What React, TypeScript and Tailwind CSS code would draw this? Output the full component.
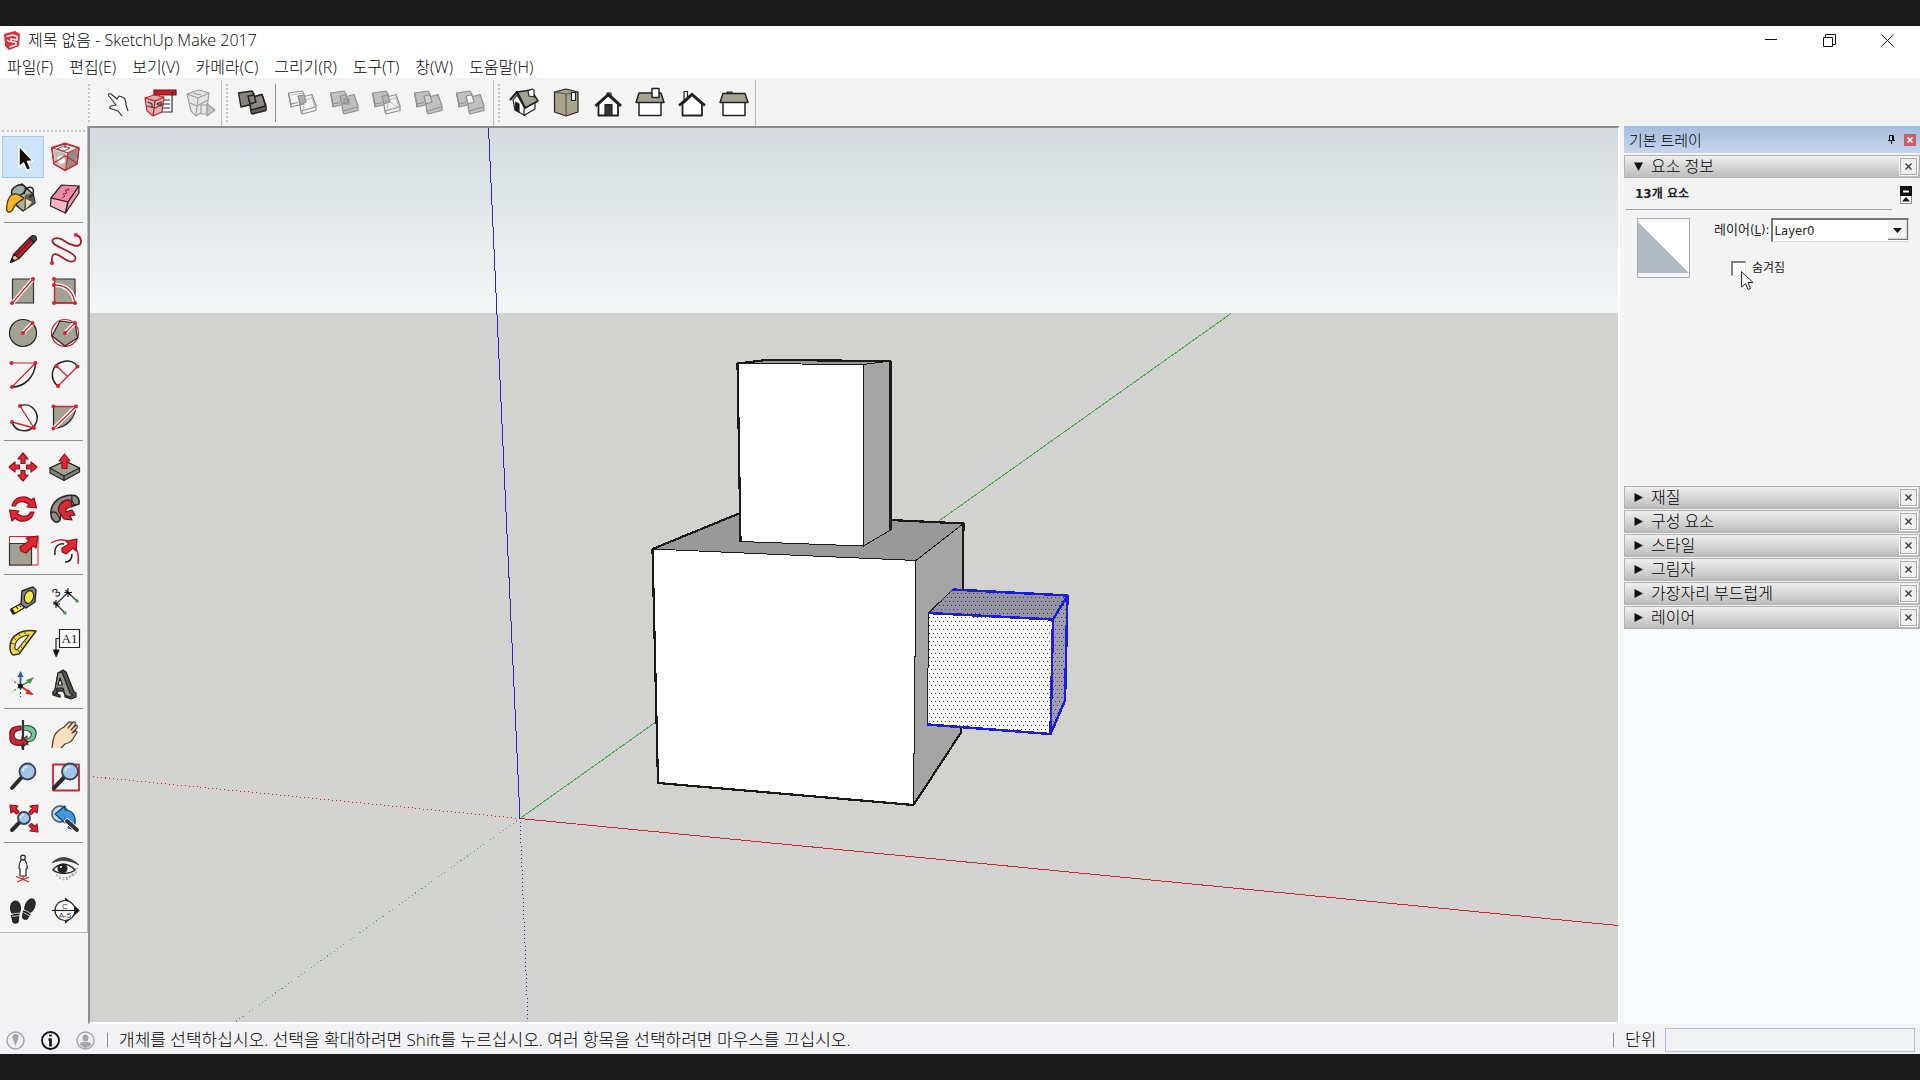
import type { ReactNode } from "react";
import clsx from "clsx";

interface ToolProps {
  /** Accessible name of the tool. */
  label: string;
  active?: boolean;
  children: ReactNode;
}

/** Square toolbar button; icons are drawn on a 42x42 grid. */
function Tool({ label, active, children }: ToolProps) {
  return (
    <button
      type="button"
      aria-label={label}
      aria-pressed={active}
      className={clsx("size-[42px] shrink-0", active && "bg-[#cce4f7] outline outline-1 -outline-offset-1 outline-[#a3c9ea]")}
    >
      <svg viewBox="0 0 42 42" className="size-full" fill="none" stroke="#222" strokeWidth="1.2" strokeLinejoin="round">
        {children}
      </svg>
    </button>
  );
}

const RED = "#d8202f";
const ARROW = "#e82534";
const ARROW_EDGE = "#8a141e";
const TAUPE = "#a3a292";

/** Round red end points used by the drawing tools. */
function Dots({ at }: { at: [number, number][] }) {
  return (
    <g fill={RED} stroke="none">
      {at.map(([x, y]) => (
        <circle key={`${x}-${y}`} cx={x} cy={y} r="2" />
      ))}
    </g>
  );
}

function Lens({ cx, cy, r, hx, hy }: { cx: number; cy: number; r: number; hx: number; hy: number }) {
  const k = r * 0.75;
  return (
    <>
      <path d={`M${cx - k} ${cy + k}L${hx} ${hy}`} stroke="#2c2c2c" strokeWidth="4" strokeLinecap="round" />
      <circle cx={cx} cy={cy} r={r} fill="#a6c4e8" stroke="#35425a" strokeWidth="1.8" />
      <path d={`M${cx - r * 0.6} ${cy}A${r * 0.6} ${r * 0.6} 0 0 1 ${cx} ${cy - r * 0.6}`} stroke="#e4effb" strokeWidth="1.6" />
    </>
  );
}

/* ------------------------------------------------------------------ */
/* Left tool palette                                                   */
/* ------------------------------------------------------------------ */

const palette: { label: string; active?: boolean; icon: ReactNode }[][] = [
  [
    {
      label: "Select",
      active: true,
      icon: <path d="M17 10V31L21.5 27L25 34.5L28.8 32.8L25.5 25.5L31 25Z" fill="#111" stroke="#fff" strokeWidth="1.5" />,
    },
    {
      label: "Make Component",
      icon: (
        <>
          <path d="M8 12L21 8L35 12L33 28L21 34L10 28Z" fill="#e9e6e2" stroke="#444" />
          <path d="M24 17L34 13L32 28L22 33Z" fill="#8f8d84" stroke="none" />
          <path d="M10 14L23 18L21 33L11 27Z" fill="#bdbab2" stroke="none" />
          <path d="M13 13l7-3 6 2-6 3Z" fill="#fff" stroke="#444" strokeWidth="0.8" />
          <path d="M13 22l3-3 4 2 1 5-4 2-3-2Z" fill="#fff" stroke="none" />
          <g stroke={RED} strokeWidth="1.3">
            <path d="M7.5 11.5L21 7L35 11.5L33 28L21 34.5L10 28Z" />
            <path d="M7.5 11.5L24 17L35 11.5M24 17L21.5 34M10 27L21 20L33 27M21 7V12" />
          </g>
        </>
      ),
    },
    {
      label: "Paint Bucket",
      icon: (
        <>
          <path d="M10 12L20 6L31 16L33 25L21 33L15 28Z" fill="#b5af93" stroke="#222" strokeWidth="1.5" />
          <path d="M23 17L30 15L33 25L22 32Z" fill="#5f5c50" stroke="none" />
          <path d="M24 21L30 24L24 31Z" fill="#e2dcb9" stroke="none" />
          <ellipse cx="16.5" cy="12.5" rx="7.5" ry="5" transform="rotate(-28 16.5 12.5)" fill="#9fb0ab" stroke="#222" strokeWidth="1.5" />
          <path d="M22 16C24 8 31 7 31.5 13C31.5 16 29 19 27 19" strokeWidth="1.5" />
          <path d="M15 16C8 15 5 21 4.5 32C6 36 10 34 11.5 30C13 25 18 24 22 20Z" fill="#f8b427" stroke="#3a2d0c" />
        </>
      ),
    },
    {
      label: "Eraser",
      icon: (
        <>
          <path d="M7 20L17.5 7L35 8L24 24Z" fill="#f48aa9" />
          <path d="M7 20L24 24L21.5 35L6.5 28Z" fill="#fbb3c6" />
          <path d="M24 24L35 8V15L21.5 35Z" fill="#e79ab0" />
          <path d="M18 20l3-2-2-2 4-1-2-3 4 0-1-2" stroke="#8d2746" strokeWidth="1" />
        </>
      ),
    },
  ],
  [
    {
      label: "Line",
      icon: (
        <>
          <path d="M8.5 34.5L12 26L27.5 10L32 14.5L17 30.5Z" fill="#c02431" />
          <path d="M8.5 34.5L12 26L17 30.5Z" fill="#e6d1a0" />
          <path d="M8.5 34.5L10 30.5L12.5 32.8Z" fill="#222" />
          <path d="M27.5 10L30.5 7.5Q35 7.5 34.5 11.5L32 14.5Z" fill="#444" />
          <path d="M14 28L29.5 12" stroke="#751019" />
        </>
      ),
    },
    {
      label: "Freehand",
      icon: (
        <>
          <path d="M8 34C7 23 13 26 16 28C22 32 28 36 31 32C35 26 15 20 10 16C5 11 13 8 19 12C26 17 36 21 37 14Q37 8 32 7" stroke="#a01d29" strokeWidth="1.8" />
          <Dots at={[[8, 35], [32, 7]]} />
        </>
      ),
    },
    {
      label: "Rectangle",
      icon: (
        <>
          <rect x="10.5" y="9" width="21" height="24" fill={TAUPE} stroke="#333" />
          <path d="M10.5 33L31 9" stroke="#fff" strokeWidth="4" />
          <path d="M10.5 33L31 9" stroke={RED} strokeWidth="1.3" />
          <Dots at={[[10, 33], [31, 9]]} />
        </>
      ),
    },
    {
      label: "Rotated Rectangle",
      icon: (
        <>
          <rect x="10.5" y="9" width="20.5" height="24" fill={TAUPE} stroke="#333" />
          <path d="M10.5 15Q28 15 31 33" stroke="#fff" strokeWidth="4" />
          <path d="M10.5 9V33H31Q28 15 10.5 15" stroke={RED} strokeWidth="1.3" />
          <Dots at={[[10, 9], [10, 15], [10, 33], [31, 33]]} />
        </>
      ),
    },
    {
      label: "Circle",
      icon: (
        <>
          <circle cx="21" cy="21" r="13.5" fill={TAUPE} />
          <path d="M21 21L30.5 11" stroke="#fff" strokeWidth="4" />
          <path d="M21 21L30.5 11" stroke={RED} strokeWidth="1.3" />
          <Dots at={[[21, 21], [30.5, 11]]} />
        </>
      ),
    },
    {
      label: "Polygon",
      icon: (
        <>
          <circle cx="21" cy="21" r="13.5" stroke={RED} />
          <path d="M16 9L31 11L33.5 26L21 34L8 24Z" fill={TAUPE} />
          <path d="M21 21L31 11" stroke="#fff" strokeWidth="4" />
          <path d="M21 21L31 11" stroke={RED} strokeWidth="1.3" />
          <Dots at={[[21, 21], [31, 11]]} />
        </>
      ),
    },
    {
      label: "Arc",
      icon: (
        <>
          <path d="M33.5 9C33 22 23 33 10 33" strokeWidth="1.5" />
          <path d="M9.5 9H33.5L10 33" stroke={RED} />
          <Dots at={[[9.5, 9], [33.5, 9], [10, 33]]} />
        </>
      ),
    },
    {
      label: "2 Point Arc",
      icon: (
        <>
          <path d="M14 32C5 25 7 11 18 8C25 5.5 31 8 33.5 12.5" strokeWidth="1.5" />
          <path d="M12.5 12L23.5 22.5M33.5 12.5L14 32" stroke={RED} strokeWidth="1.3" />
          <Dots at={[[12.5, 12], [33.5, 12.5], [14, 32]]} />
        </>
      ),
    },
    {
      label: "3 Point Arc",
      icon: (
        <>
          <path d="M18 10C30 5 40 19 33 29C27 38 13 36 10 26" strokeWidth="1.5" />
          <path d="M18 10L32 32L10 26" stroke={RED} strokeWidth="1.3" />
          <Dots at={[[18, 10], [10, 26], [32, 32]]} />
        </>
      ),
    },
    {
      label: "Pie",
      icon: (
        <>
          <path d="M9.5 10.5H32C31 23 22 32 9.5 32.5Z" fill={TAUPE} />
          <path d="M9.5 32.5L32 10.5" stroke="#fff" strokeWidth="4" />
          <path d="M9.5 10.5H32L9.5 32.5" stroke={RED} strokeWidth="1.3" />
          <Dots at={[[9.5, 10.5], [32, 10.5], [9.5, 32.5]]} />
        </>
      ),
    },
  ],
  [
    {
      label: "Move",
      icon: (
        <g fill={ARROW} stroke={ARROW_EDGE}>
          {[0, 90, 180, 270].map((deg) => (
            <path key={deg} transform={`rotate(${deg} 21 21)`} d="M21 7L26 13H23V17.5H19V13H16Z" />
          ))}
        </g>
      ),
    },
    {
      label: "Push/Pull",
      icon: (
        <>
          <path d="M6 22L21 15L35.5 22V26L20 34.5L6 27Z" fill="#85847a" />
          <path d="M6 22L21 15L35.5 22L20 30Z" fill={TAUPE} />
          <path d="M20 30V34.5" />
          <path d="M20.5 8L26 15H23V22.5H18V15H15Z" fill={ARROW} stroke={ARROW_EDGE} />
        </>
      ),
    },
    {
      label: "Rotate",
      icon: (
        <g fill={ARROW} stroke={ARROW_EDGE}>
          <path d="M10 18C12 9 23 6 29 12L32 10L34.5 20L25 19L27 16.5C22 12 15 13 13.5 18Z" />
          <path d="M32 24C30 33 19 36 13 30L10 33L7.5 22L17 23L15 25.5C20 30 27 29 28.5 24Z" />
        </g>
      ),
    },
    {
      label: "Follow Me",
      icon: (
        <>
          <path d="M7 26C6 15 16 6 31 7.500Q36 10 35 16L29 18C25 14 17 17 17 26L16 32Q13 36 10 33Q7 31 7 26Z" fill="#8f8d84" strokeWidth="1.5" />
          <path d="M7 25Q12 21 16 31M28 8Q27 14 31 17.500" />
          <path d="M27 12C19 11 13 17 15 24L20 31L28 32L26 28L31 27L28 22L22 24C21 21 24 19 28 19Z" fill="#d92a38" stroke="#5c1017" />
        </>
      ),
    },
    {
      label: "Scale",
      icon: (
        <>
          <rect x="7.5" y="6.5" width="28.5" height="28.5" stroke={RED} strokeWidth="1" />
          <rect x="7.5" y="13.5" width="22" height="21.5" fill={TAUPE} stroke="#333" />
          <path d="M36 6L34 18L31 16L24 23L19 21L18 17L27 11L24 8Z" fill={ARROW} stroke={ARROW_EDGE} />
        </>
      ),
    },
    {
      label: "Offset",
      icon: (
        <>
          <path d="M7 13C20 4 37 14 34 34" stroke={RED} strokeWidth="1.5" />
          <path d="M11 25C10 17 14 13 20 14M28 24C28 29 26 32 21 32" strokeWidth="1.5" />
          <path d="M33 9L32 21L29 18L22 24L18 22L18 18L25 14L22 11Z" fill={ARROW} stroke={ARROW_EDGE} />
        </>
      ),
    },
  ],
  [
    {
      label: "Tape Measure",
      icon: (
        <>
          <path d="M9 29L20 23L22 28L12 34Z" fill="#f7ea3c" />
          <path d="M9 29L12 34" strokeWidth="3" />
          <path d="M14 26l2 3M17 24l2 3" />
          <path d="M20 11L31 7L34 10L33 22L24 28L19 24Z" fill="#88868b" strokeWidth="1.4" />
          <ellipse cx="27" cy="17" rx="4.5" ry="6.5" transform="rotate(18 27 17)" fill="#f7ea3c" />
        </>
      ),
    },
    {
      label: "Dimension",
      icon: (
        <>
          <path d="M12 24L24 12.5M12 24L21 33M24 12.5L33 21" stroke="#333" />
          <path d="M12 20V28M9 24H16M9.5 21.5L14.5 26.5M24 8V17M20.5 12.5H28M21.5 10L26.5 15" stroke="#111" strokeWidth="1.1" />
          <text x="9" y="17" transform="rotate(-40 12 13)" fontSize="12" fontFamily="Liberation Sans" fill="#111" stroke="none">3</text>
          <g fill="#3fa34a" stroke="none">
            <circle cx="33" cy="21" r="1.8" />
            <circle cx="21" cy="33" r="1.8" />
          </g>
        </>
      ),
    },
    {
      label: "Protractor",
      icon: (
        <>
          <path d="M8 25C8 13 20 7 34 9L17 32L11 33Q8 31 8 25Z" fill="#f2d653" stroke="#3c3210" strokeWidth="1.5" />
          <path d="M13 27C12 19 18 14 27 13L15 28Z" fill="#f5f4f4" stroke="#3c3210" />
          <path d="M9 21l3 1M12 16l2 2M17 12l1 2M23 10v2M18 31l-2-3M21 27l-2-2M25 21l-2-2" stroke="#3c3210" strokeWidth="0.8" />
        </>
      ),
    },
    {
      label: "Text",
      icon: (
        <>
          <rect x="15.5" y="7.5" width="20" height="18" fill="#fff" />
          <text x="25.5" y="21" textAnchor="middle" fontSize="13" fontFamily="Liberation Serif" fill="#111" stroke="none">A1</text>
          <path d="M15.5 16.5H12V29" />
          <path d="M9.5 28H15L12.2 34.5Z" fill="#111" />
        </>
      ),
    },
    {
      label: "Axes",
      icon: (
        <>
          <path d="M18.5 22V13" stroke="#2557a7" strokeWidth="1.8" />
          <path d="M18.5 22L27 17.5" stroke="#3f9a4a" strokeWidth="1.8" />
          <path d="M18.5 22L27 28" stroke={RED} strokeWidth="1.8" />
          <path d="M18.5 24V33" stroke="#2557a7" strokeDasharray="2 2" />
          <path d="M17 23L10 28" stroke="#3f9a4a" strokeDasharray="2 2" />
          <path d="M17 21L10 16" stroke={RED} strokeDasharray="2 2" />
          <path d="M15.5 13L18.5 7L21.5 13Z" fill="#2557a7" stroke="none" />
          <path d="M24 16L32 13L28 20Z" fill="#3f9a4a" stroke="none" />
          <path d="M26 25L32 31L23.5 30Z" fill={RED} stroke="none" />
          <circle cx="18.5" cy="22" r="2" fill="#111" />
        </>
      ),
    },
    {
      label: "3D Text",
      icon: (
        <>
          <path d="M14 9L19 6L22 8L30 28L32 29V33L27 35L21 33V30L19 27H14L13 30L16 31V33L9 31V28L11 26Z" fill="#55544e" strokeWidth="1.3" />
          <path d="M14 9L18 8L26 29L29 31L25 33L21 31L19 24H13L12 28L13 30L9 29L11 26Z" fill="#96958b" />
          <path d="M16 14L18.500 21H14Z" fill="#f5f4f4" />
        </>
      ),
    },
  ],
  [
    {
      label: "Orbit",
      icon: (
        <>
          <path d="M21 12C30 10 35 15 34 21C33 26 29 28 25 28L26 31L20 26L25 22V25C29 24 31 20 28 18C26 16 23 16 21 16Z" fill="#7bc79b" stroke="#1e5a3a" />
          <path d="M19 12C10 12 7 16 8 21V26C9 31 15 32 20 31V34L26 28L20 23V26C15 27 11 24 12 20C13 17 16 16 19 16Z" fill="#cc2735" stroke="#5c1017" />
          <path d="M21 6V14M21 29V36M21 14V24" stroke="#333" strokeWidth="2.2" />
        </>
      ),
    },
    {
      label: "Pan",
      icon: (
        <path
          d="M8 34C9 27 9 21 13 18C16 15 18 14 20 13L25 8Q28 7 27 10L24 14L29 8Q32 7 31 11L27 16L32 11Q34 11 33 14L28 19L32 17Q34 18 32 20C29 25 27 29 21 30L17 34"
          fill="#f7dfc0"
          stroke="#4a3a28"
        />
      ),
    },
    { label: "Zoom", icon: <Lens cx={25.5} cy={15.5} r={8} hx={10} hy={32} /> },
    {
      label: "Zoom Window",
      icon: (
        <>
          <rect x="9" y="8.5" width="26" height="26" stroke={RED} strokeWidth="1.8" />
          <Lens cx={26} cy={15.5} r={8} hx={10} hy={32} />
        </>
      ),
    },
    {
      label: "Zoom Extents",
      icon: (
        <>
          <Lens cx={22} cy={20} r={6} hx={10} hy={32} />
          <g fill={ARROW} stroke={ARROW_EDGE}>
            <path d="M8 7L16 8L14 10.5L17 14L14.5 16L11 13L9 15Z" />
            <path d="M36 7L35 15L33 13L29 16.5L27 14L30.5 10.5L28 8Z" />
            <path d="M36 34L28 33L30.5 31L27 27.5L29.5 25.5L33 28.5L35 26Z" />
          </g>
        </>
      ),
    },
    {
      label: "Previous",
      icon: (
        <>
          <circle cx="16" cy="16" r="8" fill="#c4d8ee" stroke="#56657c" strokeWidth="1.8" />
          <path d="M11 16L21 8V12C28 12 32 17 31 26L28 31L24 30C26 25 25 21 21 20V25Z" fill="#3e97e4" stroke="#173d66" />
          <path d="M23 23L33 32" stroke="#fff" strokeWidth="5.5" strokeLinecap="round" />
          <path d="M23 23L33 32" stroke="#333" strokeWidth="4" strokeLinecap="round" />
        </>
      ),
    },
  ],
  [
    {
      label: "Position Camera",
      icon: (
        <>
          <circle cx="21" cy="9.5" r="2.3" fill="#fff" />
          <path d="M19 12Q17 15 17 20L18 21V28H24V21L25.5 20Q25 15 23 12Z" fill="#fff" />
          <path d="M14 28.5L27 34M27 29L15 34M21 28V32" stroke={RED} strokeWidth="1.3" />
        </>
      ),
    },
    {
      label: "Look Around",
      icon: (
        <>
          <path d="M8 15C14 8 25 7 35 17C26 12 16 11 8 15Z" fill="#444" stroke="#444" strokeWidth="0.8" />
          <path d="M9 22C14 15 23 14 31 22C24 27 14 26 9 22Z" fill="#fff" strokeWidth="1.5" />
          <circle cx="18.5" cy="20.5" r="4.5" fill="#222" />
          <circle cx="17" cy="19" r="1" fill="#fff" stroke="none" />
          <path d="M12 27C19 32 28 30 33 23M15 30Q20 33 24 31M28 18l4 3M25 29L34 20M22 31L32 26" stroke="#a5a5a5" strokeDasharray="2 1.5" />
        </>
      ),
    },
    {
      label: "Walk",
      icon: (
        <>
          <ellipse cx="13.5" cy="18" rx="5" ry="7" fill="#2b2b2b" />
          <path d="M9.5 25.5L17 24.5L16 32Q13 34.5 11 32Z" fill="#2b2b2b" />
          <path d="M9.5 24L17.5 23M10 26.5L17.5 25.5" stroke="#e5e5e5" strokeWidth="0.8" />
          <ellipse cx="28" cy="16" rx="4.5" ry="7.5" transform="rotate(25 28 16)" fill="#2b2b2b" />
          <path d="M21.5 21L28 24.5L25 29Q21 30 20.5 27Z" fill="#2b2b2b" />
          <path d="M22.5 20L29 23.5M21.5 22.5L28 26" stroke="#e5e5e5" strokeWidth="0.8" />
        </>
      ),
    },
    {
      label: "Section Plane",
      icon: (
        <>
          <path d="M21 8L35 20.5L21 33" fill="#111" />
          <circle cx="21" cy="20.5" r="10" fill="#fff" />
          <path d="M8 20.5H34" />
          <text x="21" y="18.5" textAnchor="middle" fontSize="8" fontFamily="Liberation Sans" fill="#333" stroke="none">C</text>
          <text x="21" y="28" textAnchor="middle" fontSize="8" fontFamily="Liberation Sans" fill="#333" stroke="none">A-5</text>
        </>
      ),
    },
  ],
];

/* ------------------------------------------------------------------ */
/* Top toolbar icons                                                   */
/* ------------------------------------------------------------------ */

const BACK = "M7.5 11L21 9L23 12V22L18 23L10 25Z";
const FRONT = "M18 16L31 12.5L35 24V28.5L21 32L20 30Z";
const OVERLAP = "M17 14L23 13L25 20L19 22Z";

/** Two overlapping solids; fills say which part stays after the operation. */
function Solids({ back, front, overlap }: { back: string; front: string; overlap: string }) {
  return (
    <g stroke="#8f8f8f">
      <path d={BACK} fill={back} />
      <path d={FRONT} fill={front} />
      <path d={OVERLAP} fill={overlap} />
      <path d="M10 22L17 20.5M20 29L34.5 25M7.5 11L10 22V25" />
    </g>
  );
}

const solids: { label: string; icon: ReactNode }[] = [
  {
    label: "Intersect",
    icon: (
      <>
        <Solids back="none" front="none" overlap="#b0b0b0" />
        <path d="M10 13L22 11M20 19L31 16L34 26M31 12.5V16M23 22L21 32" stroke="#a8a8a8" strokeWidth="0.8" />
      </>
    ),
  },
  {
    label: "Union",
    icon: (
      <>
        <Solids back="#c0c0c0" front="#c0c0c0" overlap="#b8b8b8" />
        <path d="M21 17H26V22H21Z" stroke="#8e8e8e" />
      </>
    ),
  },
  {
    label: "Subtract",
    icon: (
      <>
        <Solids back="#c0c0c0" front="#f2f2f2" overlap="#b4b4b4" />
        <path d="M20 19L31 16L34 26M31 12.5V16M23 22L21 32M25 20L34 26" stroke="#a8a8a8" strokeWidth="0.8" />
      </>
    ),
  },
  { label: "Trim", icon: <Solids back="#c0c0c0" front="#c0c0c0" overlap="#d2d2d2" /> },
  { label: "Split", icon: <Solids back="#c0c0c0" front="#c0c0c0" overlap="#f7f7f7" /> },
];

const views: { label: string; icon: ReactNode }[] = [
  {
    label: "Iso",
    icon: (
      <>
        <path d="M10 18L14 13L22 26V33.5L12 28Z" fill="#fff" />
        <path d="M21 27L32 20V27L21 33.5Z" fill="#fff" />
        <path d="M12.5 20L16 22V30L12.5 28Z" fill="#222" />
        <path d="M14 10L28 8L35 19L22 26Z" fill={TAUPE} strokeWidth="1.5" />
        <path d="M7 18L14 10L22 26" strokeWidth="2.2" />
        <path d="M25 9L29 7L31 8V15L26 14Z" fill="#fff" />
      </>
    ),
  },
  {
    label: "Top",
    icon: (
      <>
        <path d="M9.5 10L21 7L33 10V30L21 34L9.5 30Z" fill="#a8a48c" />
        <path d="M21 12V34M9.5 10L21 12L33 10" stroke="#55534a" />
        <rect x="26.5" y="10.5" width="4" height="8" fill="#fff" />
      </>
    ),
  },
  {
    label: "Front",
    icon: (
      <>
        <rect x="20" y="11" width="4" height="6" fill="#fff" />
        <path d="M11.5 22V33.5H31V22L21 13Z" fill="#fff" strokeWidth="1.8" />
        <path d="M8.5 24L21.5 12.5L34 24" strokeWidth="3" strokeLinejoin="miter" />
        <rect x="18" y="22.5" width="7" height="11" fill="#333" />
      </>
    ),
  },
  {
    label: "Right",
    icon: (
      <>
        <rect x="10" y="20" width="22" height="13.5" fill="#fff" strokeWidth="1.5" />
        <path d="M10 11H32L35 20.5H7Z" fill={TAUPE} strokeWidth="1.5" />
        <rect x="23" y="6.5" width="7" height="9" fill="#fff" strokeWidth="1.5" />
      </>
    ),
  },
  {
    label: "Back",
    icon: (
      <>
        <rect x="13" y="9.5" width="3.5" height="8" fill="#fff" />
        <path d="M11.5 22V33.5H31V22L21 13Z" fill="#fff" strokeWidth="1.8" />
        <path d="M8 23.5L21 12L34 23.5" strokeWidth="2.4" strokeLinejoin="miter" />
      </>
    ),
  },
  {
    label: "Left",
    icon: (
      <>
        <rect x="14" y="10" width="5" height="2" fill="#777" />
        <rect x="10" y="20" width="22" height="13.5" fill="#fff" strokeWidth="1.5" />
        <path d="M10 11.5H32L35 20.5H7Z" fill={TAUPE} strokeWidth="1.5" />
      </>
    ),
  },
];

const menus = ["파일(F)", "편집(E)", "보기(V)", "카메라(C)", "그리기(R)", "도구(T)", "창(W)", "도움말(H)"];

function Grip() {
  return <div className="my-1 w-[3px] self-stretch border-l-2 border-dotted border-[#c4c4c4]" />;
}

function TitleBar() {
  return (
    <header className="flex h-7 shrink-0 items-center bg-white pl-1">
      <svg viewBox="0 0 17 19" className="h-[19px] w-[17px]" fill="#dc2f35">
        <path d="M0 3L11 0L16 3L15 15L5 19L1 15Z" />
        <path d="M2.5 5.5L9 4L13 5.5V9L7 8V10.5L12 11.5V14L5.5 16M3 9L6 11" fill="none" stroke="#fff" strokeWidth="1.5" />
      </svg>
      <h1 className="ml-[7px] text-[16px] leading-5 font-light text-black">제목 없음 - SketchUp Make 2017</h1>
      <div className="ml-auto flex h-full items-center">
        <button type="button" aria-label="Minimize" className="flex h-full w-[58px] items-center justify-center">
          <svg viewBox="0 0 12 12" className="size-3" stroke="#111"><path d="M0 5.5H12" /></svg>
        </button>
        <button type="button" aria-label="Restore" className="flex h-full w-[58px] items-center justify-center">
          <svg viewBox="0 0 13 13" className="size-[13px]" fill="none" stroke="#111"><path d="M.5 3.5H9.5V12.5H.5ZM2.5 3.5V.5H12.5V10.5H9.5" /></svg>
        </button>
        <button type="button" aria-label="Close" className="mr-1 flex h-full w-[58px] items-center justify-center">
          <svg viewBox="0 0 13 13" className="size-[13px]" stroke="#111"><path d="M.5 .5L12.5 12.5M12.5 .5L.5 12.5" /></svg>
        </button>
      </div>
    </header>
  );
}

function TopToolbar() {
  return (
    <div className="flex h-12 shrink-0 items-stretch bg-[#f2f2f2] pt-[2px] pl-[88px]">
      <div className="flex items-center border-r border-[#b9b9b9] bg-[#f5f4f4]" role="toolbar" aria-label="Warehouse">
        <Grip />
        <div className="-mr-[2px] flex pl-[6px]">
          <Tool label="Interact">
            <path d="M12 14Q10 11 14 12L20 17L22 14L25 15L27 16Q29 18 29 23L31 29M12 14L19 23L14 24Q11 26 15 27L21 29L25 34" fill="#fff" stroke="#333" />
          </Tool>
          <Tool label="Component Options">
            <rect x="20" y="9" width="13" height="21" fill="#fff" stroke="#333" />
            <path d="M15 8H37V13H15Z" fill="#c81f2d" stroke="#7a1019" />
            <path d="M32 10h3l-1.5 2Z" fill="#111" stroke="none" />
            <path d="M24 18H31M24 22H31M24 26H31" />
            <path d="M6 16L15 13L25 15L23 30L14 34L8 29Z" fill="#d3b4b0" stroke={RED} />
            <path d="M6 16L16 19L25 15M16 19L14 34M8 24L16 26L24 22" stroke="#b51d2a" />
            <path d="M9 20l4 2v4M18 22l4-2v4Z" stroke="#333" />
          </Tool>
          <Tool label="Component Attributes">
            <g stroke="#a0a0a0" fill="#e6e6e6">
              <path d="M6 12L18 8L28 11L26 27L15 34L10 29Z" />
              <path d="M6 12L17 16L28 11M17 16L15 34M9 21L16 24L27 18M12 11L20 13" />
              <path d="M20 23H26V32H20Z" />
              <path d="M26 22L34 28L26 34Z" fill="#c4c4c4" />
            </g>
          </Tool>
        </div>
      </div>
      <div className="flex items-center border-r border-[#b9b9b9] bg-[#f5f4f4] pr-[2px] pl-1" role="toolbar" aria-label="Solid Tools">
        <Grip />
        <div className="flex items-center pl-[2px]">
          <Tool label="Outer Shell">
            <g stroke="#222" strokeWidth="1.4">
              <path d={BACK} fill="#85857a" />
              <path d={FRONT} fill="#62625a" />
              <path d="M18 16L31 12.5L34.5 24L20 28Z" fill="#8b8b7f" />
              <path d={OVERLAP} fill="#85857a" />
            </g>
          </Tool>
          <div className="mr-[5px] ml-[2px] h-[38px] w-px bg-[#8c8c8c]" />
          {solids.map((tool) => (
            <Tool key={tool.label} label={tool.label}>{tool.icon}</Tool>
          ))}
        </div>
      </div>
      <div className="flex items-center border-r border-[#b9b9b9] bg-[#f5f4f4] pl-1" role="toolbar" aria-label="Views">
        <Grip />
        <div className="flex pl-[2px]">
          {views.map((tool) => (
            <Tool key={tool.label} label={tool.label}>{tool.icon}</Tool>
          ))}
        </div>
      </div>
    </div>
  );
}

function ToolPalette() {
  return (
    <aside className="w-[88px] shrink-0 bg-[#f2f2f2]">
      <div className="border-r border-b border-[#b9b9b9] bg-[#f5f4f4] px-[2px] pt-1">
        <div className="mb-[3px] h-[3px] border-t-2 border-dotted border-[#c4c4c4]" />
        {palette.map((group, index) => (
          <div key={group[0].label}>
            {index > 0 && <div className="mx-[2px] mt-[2px] mb-[5px] h-px bg-[#8c8c8c]" />}
            <div className="grid grid-cols-[42px_42px]">
              {group.map((tool) => (
                <Tool key={tool.label} label={tool.label} active={tool.active}>{tool.icon}</Tool>
              ))}
            </div>
          </div>
        ))}
      </div>
    </aside>
  );
}

/** 3D model view: sky, ground, the three axes and the boxes. */
function Viewport() {
  return (
    <main className="min-w-0 flex-1 border-2 border-t-[#8d8d8f] border-r-white border-b-white border-l-[#8d8d8f] bg-[#d2d2d0]">
      <svg viewBox="90 128 1528 894" preserveAspectRatio="xMinYMin slice" className="size-full" fill="none" shapeRendering="crispEdges">
        <defs>
          <linearGradient id="sky" x1="0" y1="0" x2="0" y2="1">
            <stop offset="0" stopColor="#d4dadd" />
            <stop offset="1" stopColor="#f4f7f7" />
          </linearGradient>
          <pattern id="dots" width="4" height="8" patternUnits="userSpaceOnUse">
            <rect x="1" y="1" width="1" height="1" fill="#3c3c50" />
            <rect x="3" y="5" width="1" height="1" fill="#3c3c50" />
          </pattern>
        </defs>
        <rect x="90" y="128" width="1528" height="186" fill="url(#sky)" />
        <rect x="90" y="313" width="1528" height="709" fill="#d2d2d0" />

        {/* Axes: solid in the positive direction, dotted in the negative one. */}
        <path d="M520 818.5L1231 313.5" stroke="#4aa84a" />
        <path d="M520 818.5L235 1022" stroke="#6f9c6f" strokeDasharray="1 3" />
        <path d="M520 818.5L1618 925.5" stroke="#c9282d" />
        <path d="M520 818.5L90 776.5" stroke="#c9282d" strokeDasharray="1 3" />
        <path d="M520 818.5L488.5 128" stroke="#2a2ab4" />
        <path d="M520 818.5L528 1022" stroke="#2a2ab4" strokeDasharray="1 3" />

        {/* Base cube */}
        <g stroke="#1a1a1a" strokeLinejoin="round">
          <path d="M652.5 549L739 513.5L963.5 523.5L916 560.5Z" fill="#999" stroke="none" />
          <path d="M916 560.5L963.5 523.5L961 732.5L913.5 805Z" fill="#a5a5a5" stroke="none" />
          <path d="M652.5 549L916 560.5L913.5 805L658 783Z" fill="#fff" />
          <path d="M916 560.5L963.5 523.5" />
          <path d="M739 513.5L652.5 549L658 783L913.5 805L961 732.5L963.5 523.5L890 520" strokeWidth="2.2" />
        </g>

        {/* Tower */}
        <g stroke="#1a1a1a" strokeLinejoin="round">
          <path d="M737.5 363.5L766 360L890.5 361L863.5 364.5Z" fill="#999" />
          <path d="M863.5 364.5L890.5 361V530L863.5 546Z" fill="#a5a5a5" />
          <path d="M737.5 363.5L863.5 364.5V546L740.5 541.5Z" fill="#fff" />
          <path d="M740.5 541.5L737.5 363.5L766 360L890.5 361V530" strokeWidth="2.2" />
        </g>

        {/* Selected box */}
        <g strokeLinejoin="round">
          <path d="M928.5 613L952.5 589.5L1067.5 595.5L1053 619.5Z" fill="#9693a3" />
          <path d="M1053 619.5L1067.5 595.5L1065 700.5L1050.5 734Z" fill="#a09eae" />
          <path d="M928.5 613L1053 619.5L1050.5 734L927.5 724.5Z" fill="#fff" />
          <path d="M928.5 613L952.5 589.5L1067.5 595.5L1065 700.5L1050.5 734L927.5 724.5Z" fill="url(#dots)" />
          <path d="M952.5 589.5L928.5 613L927.5 724.5" stroke="#222" />
          <path d="M952.5 589.5L1067.5 595.5L1065 700.5L1050.5 734L927.5 724.5M928.5 613L1053 619.5L1067.5 595.5M1053 619.5L1050.5 734" stroke="#1c1cdc" strokeWidth="2.5" />
        </g>
      </svg>
    </main>
  );
}

function TrayHeader({ title, open }: { title: string; open?: boolean }) {
  return (
    <div className="mb-px flex h-[23px] items-center border border-[#b3b3b3] bg-linear-to-b from-[#efefef] to-[#bdbdbd] pr-[2px] pl-[9px]">
      <button type="button" aria-expanded={!!open} className="flex flex-1 items-center gap-2 pb-px text-left text-[16px] leading-5 font-light text-black">
        <svg viewBox="0 0 9 9" className="size-[9px]" fill="#111">
          {open ? <path d="M0 .5H9L4.5 9Z" /> : <path d="M.5 0V9L9 4.5Z" />}
        </svg>
        {title}
      </button>
      <button type="button" aria-label={`${title} 닫기`} className="flex size-[17px] items-center justify-center border border-[#a8a8a8] bg-[#f0f0f0] outline outline-1 outline-white">
        <svg viewBox="0 0 7 7" className="size-[7px]" stroke="#333" strokeWidth="1.2"><path d="M.5 .5L6.5 6.5M6.5 .5L.5 6.5" /></svg>
      </button>
    </div>
  );
}

function EntityInfo() {
  return (
    <section className="h-[307px] px-[2px] pt-[7px]">
      <div className="mr-[26px] flex h-6 items-start justify-between border-b border-[#a5a5a5] pl-[9px]">
        <h2 className="font-['DejaVu_Sans','Noto_Sans_CJK_KR',sans-serif] text-[12px] leading-4 font-bold text-[#222]">13개 요소</h2>
        <button type="button" aria-label="Toggle details" className="-mr-[20px]">
          <svg viewBox="0 0 12 18" className="h-[18px] w-3">
            <path d="M.5 .5H11.5V17.5H.5Z" fill="#fff" stroke="#888" />
            <path d="M0 0H12V10H0Z" fill="#111" />
            <path d="M3 4.5H9V6.5H3Z" fill="#fff" />
            <path d="M6 11L10 15.5H2Z" fill="#111" />
          </svg>
        </button>
      </div>
      <div className="flex pt-2 pl-[11px] font-['DejaVu_Sans_Condensed','Noto_Sans_CJK_KR',sans-serif] text-[13px] text-[#222]">
        <svg viewBox="0 0 53 60" className="h-[60px] w-[53px] shrink-0">
          <rect x=".5" y=".5" width="52" height="59" fill="#f6f6f8" stroke="#a9a9ad" />
          <rect x="1" y="4" width="51" height="51" fill="#fff" />
          <path d="M1 4L52 55H1Z" fill="#afbac2" />
        </svg>
        <div className="ml-[24px] flex-1 pr-[9px]">
          <div className="flex items-center">
            <label htmlFor="layer" className="mr-[2px] leading-5 whitespace-nowrap">
              레이어(<u>L</u>):
            </label>
            <div className="relative flex-1">
              <select id="layer" className="block h-6 w-full appearance-none border border-t-2 border-l-2 border-t-[#777] border-r-[#ddd] border-b-[#ddd] border-l-[#777] bg-white pl-px leading-5">
                <option>Layer0</option>
              </select>
              <svg viewBox="0 0 20 20" className="pointer-events-none absolute top-[2px] right-px size-5">
                <path d="M0 0H20V20H0Z" fill="#f2f2f2" />
                <path d="M19.5 0V19.5H0" fill="none" stroke="#777" strokeWidth="1.5" />
                <path d="M5 8H14L9.5 13Z" fill="#111" />
              </svg>
            </div>
          </div>
          <div className="relative mt-4 ml-[17px] flex items-center gap-[6px]">
            <input id="hidden" type="checkbox" className="size-[15px] appearance-none border border-t-2 border-l-2 border-t-[#808080] border-r-[#e3e3e3] border-b-[#e3e3e3] border-l-[#808080] bg-white" />
            <label htmlFor="hidden" className="text-[12px] leading-5">숨겨짐</label>
            <svg viewBox="0 0 13 20" className="pointer-events-none absolute top-[13px] left-[10px] h-5 w-[13px]">
              <path d="M.5 .5V16L4.5 12.5L7 18.5L9.5 17.5L7 11.5H12Z" fill="#fff" stroke="#222" />
            </svg>
          </div>
        </div>
      </div>
    </section>
  );
}

const trays = ["재질", "구성 요소", "스타일", "그림자", "가장자리 부드럽게", "레이어"];

function Tray() {
  return (
    <aside className="ml-1 flex w-[296px] shrink-0 flex-col bg-[#f8fbff]">
      <div className="flex h-[27px] items-center bg-linear-to-b from-[#a6bddb] to-[#c5d5ee] pr-1 pl-[5px]">
        <h2 className="text-[15px] leading-5 font-light text-black">기본 트레이</h2>
        <button type="button" aria-label="Pin" className="mr-[9px] ml-auto">
          <svg viewBox="0 0 7 9" className="h-[9px] w-[7px]" fill="none" stroke="#111"><path d="M1.5 5.5V.5H5.5V5.5M4.5 1V5M0 5.5H7M3.5 6V9" /></svg>
        </button>
        <button type="button" aria-label="Close tray" className="flex size-3 items-center justify-center bg-[#c4616a]">
          <svg viewBox="0 0 6 6" className="size-[6px]" stroke="#fff" strokeWidth="1.5"><path d="M.5 .5L5.5 5.5M5.5 .5L.5 5.5" /></svg>
        </button>
      </div>
      <div className="bg-[#f3f3f4] pt-[2px]">
        <TrayHeader title="요소 정보" open />
        <EntityInfo />
        {trays.map((title) => (
          <TrayHeader key={title} title={title} />
        ))}
      </div>
    </aside>
  );
}

function StatusBar() {
  return (
    <footer className="flex h-[30px] shrink-0 items-center bg-[#f2f2f4] pt-[2px] pr-[5px] pl-[6px] text-black">
      <div className="flex gap-4">
        <button type="button" aria-label="Geo-location">
          <svg viewBox="0 0 19 19" className="size-[19px]" fill="none" stroke="#a5a5a5" strokeWidth="1.5">
            <circle cx="9.5" cy="9.5" r="8.5" />
            <path d="M9.5 3Q13 3 12.5 7L9.5 15L6.5 7Q6 3 9.5 3Z" fill="#a5a5a5" stroke="none" />
          </svg>
        </button>
        <button type="button" aria-label="Credits">
          <svg viewBox="0 0 19 19" className="size-[19px]" fill="none" stroke="#111" strokeWidth="1.8">
            <circle cx="9.5" cy="9.5" r="8.5" />
            <path d="M9.5 3.5V5.5M9.5 7.5V15.5M7.5 8.5H10" strokeWidth="2.6" />
          </svg>
        </button>
        <button type="button" aria-label="Sign in">
          <svg viewBox="0 0 19 19" className="size-[19px]" fill="none" stroke="#a5a5a5" strokeWidth="1.5">
            <circle cx="9.5" cy="9.5" r="8.5" />
            <path d="M9.5 3.5A3 3.5 0 0 1 9.5 10.5A3 3.5 0 0 1 9.5 3.5M4 14Q4 11 7 11H12Q15 11 15 14L9.5 17.5Z" fill="#a5a5a5" stroke="none" />
          </svg>
        </button>
      </div>
      <div className="mr-[11px] ml-3 h-[14px] w-px bg-[#8c8c8c]" />
      <p className="flex-1 text-[17px] leading-5 font-light">
        개체를 선택하십시오. 선택을 확대하려면 Shift를 누르십시오. 여러 항목을 선택하려면 마우스를 끄십시오.
      </p>
      <div className="mr-[11px] h-[14px] w-px bg-[#8c8c8c]" />
      <label htmlFor="measurement" className="w-[40px] text-[17px] leading-5 font-light">단위</label>
      <input id="measurement" type="text" className="h-6 w-[250px] border border-[#b4bfd6] bg-[#f2f2f4] px-1 text-[16px]" />
    </footer>
  );
}

export default function App() {
  return (
    <div className="flex h-screen flex-col bg-[#1a1a1a] py-[26px] font-['Open_Sans','Noto_Sans_CJK_KR',sans-serif]">
      <TitleBar />
      <nav aria-label="Menu" className="flex h-6 shrink-0 items-center gap-4 bg-white pt-[2px] pl-[7px] text-[16px] leading-5 font-light text-black">
        {menus.map((menu) => (
          <button key={menu} type="button">{menu}</button>
        ))}
      </nav>
      <TopToolbar />
      <div className="flex min-h-0 flex-1 bg-[#f5f5f6]">
        <ToolPalette />
        <Viewport />
        <Tray />
      </div>
      <StatusBar />
    </div>
  );
}
